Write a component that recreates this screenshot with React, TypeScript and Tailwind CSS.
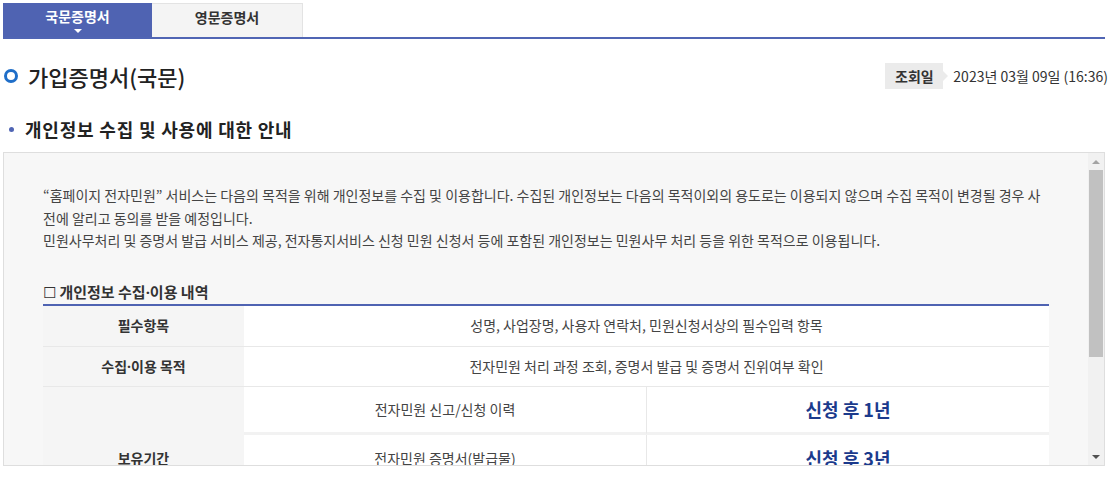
import React from "react";

const font = { fontFamily: '"Noto Sans CJK KR", "Noto Sans", sans-serif' };

// narrow middle dot, as in the reference (the CJK font draws it full width)
function Dot() {
  return <span style={{ fontFamily: '"Noto Sans", sans-serif' }}>·</span>;
}

function Tabs() {
  return (
    <div className="px-[3px] pt-[3px]">
      <div className="flex h-[34px]">
        <div className="relative flex w-[149px] items-start justify-center bg-[#4f63b2] pt-[3px] text-[14px] font-bold text-white">
          국문증명서
          <span className="absolute bottom-[4px] left-1/2 h-0 w-0 -translate-x-1/2 border-x-[4px] border-t-[4px] border-x-transparent border-t-white" />
        </div>
        <div className="flex w-[151px] items-start justify-center border-r border-t border-[#e3e3e3] bg-[#f4f4f4] pt-[3px] text-[14px] font-bold text-[#333]">
          영문증명서
        </div>
      </div>
      <div className="h-[2px] bg-[#5065b4]" />
    </div>
  );
}

function Header() {
  return (
    <div className="flex items-center justify-between pl-[4px] pt-[22px]">
      <div className="flex items-center gap-[10px]">
        <span className="h-[14px] w-[14px] rounded-full border-[3.5px] border-[#1f6ec8]" />
        <h1 className="text-[22px] font-medium leading-[30px] text-[#222]">가입증명서(국문)</h1>
      </div>
      <div className="flex items-center whitespace-nowrap">
        <div className="relative flex h-[26px] w-[58px] items-center justify-center bg-[#ebebeb] text-[14px] font-bold text-[#333]">
          조회일
          <span className="absolute right-[-5px] top-1/2 h-0 w-0 -translate-y-1/2 border-y-[5px] border-l-[5px] border-y-transparent border-l-[#ebebeb]" />
        </div>
        <span className="ml-[10px] text-[14px] text-[#333]">2023년 03월 09일 (16:36)</span>
      </div>
    </div>
  );
}

function Scrollbar() {
  return (
    <div className="flex w-[16px] flex-col bg-[#f1f1f1]">
      <div className="flex h-[17px] items-center justify-center">
        <span className="h-0 w-0 border-x-[4px] border-b-[4px] border-x-transparent border-b-[#a3a3a3]" />
      </div>
      <div className="mx-[1px] h-[187px] bg-[#c1c1c1]" />
      <div className="flex-1" />
      <div className="flex h-[16px] items-center justify-center">
        <span className="h-0 w-0 border-x-[4px] border-t-[4px] border-x-transparent border-t-[#505050]" />
      </div>
    </div>
  );
}

function Table() {
  const th = "flex items-center justify-center bg-[#f5f5f5] text-[14px] font-bold text-[#333]";
  const td = "flex items-center justify-center bg-white text-[14px] text-[#444]";
  const strong = "flex items-center justify-center bg-white text-[18px] font-bold text-[#1b3a8c]";
  return (
    <div className="grid grid-cols-[201px_403px_1fr] border-t-2 border-[#4f63b2]">
      <div className={`${th} h-[41px] border-b border-[#e8e8e8]`}>필수항목</div>
      <div className={`${td} col-span-2 border-b border-[#e8e8e8]`}>성명, 사업장명, 사용자 연락처, 민원신청서상의 필수입력 항목</div>
      <div className={`${th} h-[40px] border-b border-[#e8e8e8]`}>
        <span>수집<Dot />이용 목적</span>
      </div>
      <div className={`${td} col-span-2 border-b border-[#e8e8e8]`}>전자민원 처리 과정 조회, 증명서 발급 및 증명서 진위여부 확인</div>
      <div className={`${th} row-span-3`}>보유기간</div>
      <div className={`${td} h-[48px] border-b-[3px] border-r border-b-[#f2f2f2] border-r-[#e8e8e8]`}>전자민원 신고/신청 이력</div>
      <div className={`${strong} border-b-[3px] border-[#f2f2f2]`}>신청 후 1년</div>
      <div className={`${td} h-[48px] border-r border-r-[#e8e8e8]`}>전자민원 증명서(발급물)</div>
      <div className={strong}>신청 후 3년</div>
      <div className={`${td} h-[48px] border-r border-r-[#e8e8e8]`}>기타</div>
      <div className={strong}>신청 후 5년</div>
    </div>
  );
}

export default function App() {
  return (
    <div className="h-[486px] w-[1108px] overflow-hidden bg-white" style={font}>
      <Tabs />
      <Header />
      <div className="flex items-center gap-[11px] pl-[9px] pt-[26px]">
        <span className="h-[5px] w-[5px] rounded-full bg-[#5065b4]" />
        <h2 className="text-[18px] font-bold leading-[24px] tracking-[0.8px] text-[#222]">개인정보 수집 및 사용에 대한 안내</h2>
      </div>
      <div className="mx-[3px] mt-[11px] flex h-[314px] border border-[#dedede] bg-[#f7f7f7]">
        <div className="flex-1 overflow-hidden pl-[39px] pr-[39px] pt-[31px]">
          <p className="text-[14px] leading-[22.5px] text-[#444]">
            “홈페이지 전자민원” 서비스는 다음의 목적을 위해 개인정보를 수집 및 이용합니다. 수집된 개인정보는 다음의 목적이외의 용도로는 이용되지 않으며 수집 목적이 변경될 경우 사전에 알리고 동의를 받을 예정입니다.
            <br />
            민원사무처리 및 증명서 발급 서비스 제공, 전자통지서비스 신청 민원 신청서 등에 포함된 개인정보는 민원사무 처리 등을 위한 목적으로 이용됩니다.
          </p>
          <h3 className="mt-[30px] pb-[2px] text-[15px] font-bold leading-[20px] text-[#333]">
            <span className="font-normal">☐</span> 개인정보 수집<Dot />이용 내역
          </h3>
          <Table />
        </div>
        <Scrollbar />
      </div>
    </div>
  );
}
